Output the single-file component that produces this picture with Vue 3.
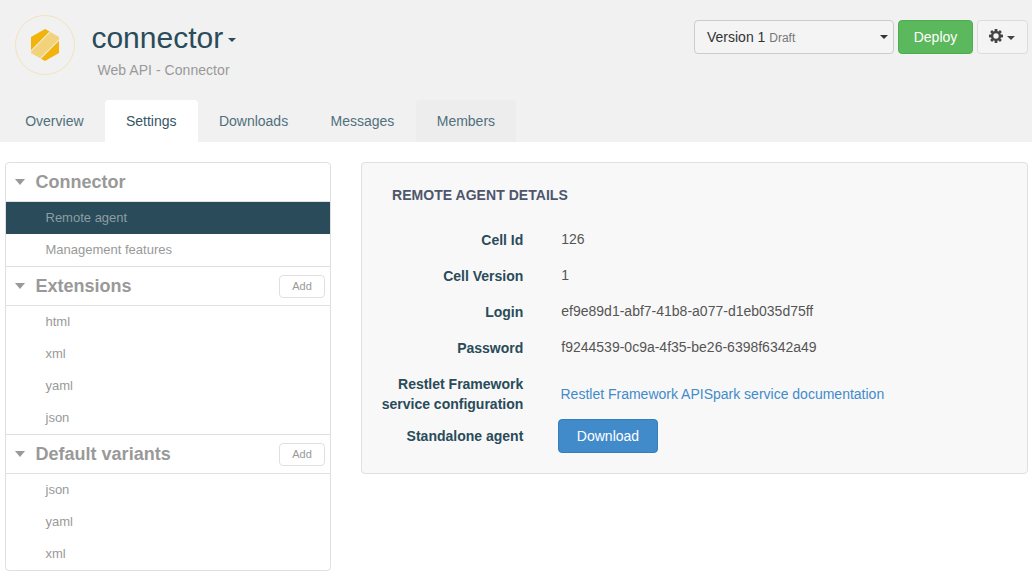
<script setup>
const tabs = [
  { label: 'Overview' },
  { label: 'Settings', state: 'active' },
  { label: 'Downloads' },
  { label: 'Messages' },
  { label: 'Members', state: 'hover' },
]

const sections = [
  { title: 'Connector', items: ['Remote agent', 'Management features'], selected: 'Remote agent' },
  { title: 'Extensions', items: ['html', 'xml', 'yaml', 'json'], addable: true },
  { title: 'Default variants', items: ['json', 'yaml', 'xml'], addable: true },
]

const details = [
  { label: 'Cell Id', value: '126' },
  { label: 'Cell Version', value: '1' },
  { label: 'Login', value: 'ef9e89d1-abf7-41b8-a077-d1eb035d75ff' },
  { label: 'Password', value: 'f9244539-0c9a-4f35-be26-6398f6342a49' },
]
</script>

<template>
  <div class="page">
    <header class="header">
      <div class="top">
        <svg class="logo" width="60" height="60" viewBox="0 0 60 60">
          <circle cx="30" cy="30" r="29.5" fill="none" stroke="#f2e3b8" />
          <path d="M30 14 L34.6 16.6 L16 35.2 V22 Z" fill="#f2b40a" />
          <path d="M35.4 17.1 L44 22 V24.6 L25.1 43.2 L16 38 V36.4 Z" fill="#f2d27b" />
          <path d="M44 25.8 V38 L30 46 L26 43.7 Z" fill="#f2b40a" />
        </svg>
        <div class="heading">
          <h1>connector<span class="caret title-caret"></span></h1>
          <p>Web API - Connector</p>
        </div>
        <div class="actions">
          <button class="btn version">
            <span>Version 1 <small>Draft</small></span><span class="caret"></span>
          </button>
          <button class="btn deploy">Deploy</button>
          <button class="btn tools">
            <svg width="14" height="14" viewBox="0 0 14 14">
              <g fill="#444">
                <rect v-for="a in [0, 45, 90, 135]" :key="a" x="5.6" y="0" width="2.8" height="14" rx=".4" :transform="`rotate(${a} 7 7)`" />
              </g>
              <circle cx="7" cy="7" r="3.9" fill="#f4f4f4" stroke="#444" stroke-width="2.4" />
            </svg>
            <span class="caret"></span>
          </button>
        </div>
      </div>
      <nav class="tabs">
        <a v-for="t in tabs" :key="t.label" :class="t.state">{{ t.label }}</a>
      </nav>
    </header>

    <div class="body">
      <aside class="sidebar">
        <section v-for="s in sections" :key="s.title">
          <h2>
            <span class="arrow"></span>{{ s.title }}
            <button v-if="s.addable" class="add">Add</button>
          </h2>
          <ul>
            <li v-for="i in s.items" :key="i" :class="{ selected: i === s.selected }">{{ i }}</li>
          </ul>
        </section>
      </aside>

      <main class="panel">
        <h3>REMOTE AGENT DETAILS</h3>
        <dl>
          <div v-for="d in details" :key="d.label" class="row">
            <dt>{{ d.label }}</dt>
            <dd>{{ d.value }}</dd>
          </div>
          <div class="row docs">
            <dt>Restlet Framework service configuration</dt>
            <dd><a>Restlet Framework APISpark service documentation</a></dd>
          </div>
          <div class="row agent">
            <dt>Standalone agent</dt>
            <dd><button class="btn download">Download</button></dd>
          </div>
        </dl>
      </main>
    </div>
  </div>
</template>

<style>
body { background: #fff; }
</style>

<style scoped>
* { box-sizing: border-box; }
.page { height: 581px; overflow: hidden; font: 14px/20px "Liberation Sans", Arial, sans-serif; color: #444; }
h1, h2, h3, p, ul, dl, dd { margin: 0; padding: 0; }
button { font-family: inherit; margin: 0; }
.caret { display: inline-block; flex: none; border: 4px solid transparent; border-top-color: currentColor; border-bottom: 0; }

.header { height: 142px; background: #f1f1f1; display: flex; flex-direction: column; justify-content: space-between; }
.top { display: flex; align-items: flex-start; padding: 15px 4px 0 15px; }
.logo { flex: none; }
.heading { margin-left: 16.4px; padding-top: 5px; }
h1 { display: flex; align-items: center; font-weight: 400; font-size: 30px; line-height: 36px; color: #294b5a; }
.title-caret { margin: 4px 0 0 5px; }
.heading p { margin: 4px 0 0 6px; color: #999; letter-spacing: .05px; }
.actions { display: flex; gap: 4px; margin-left: auto; padding-top: 5px; }
.btn { height: 34px; border: 1px solid #ccc; border-radius: 4px; font-size: 14px; line-height: 20px; padding: 0; color: #333; background: #f4f4f4; }
.version { width: 200px; display: flex; align-items: center; justify-content: space-between; padding: 0 5px 0 12px; }
.version small { font-size: 12px; color: #777; }
.deploy { width: 75px; background: #5cb85c; border-color: #4cae4c; color: #fff; }
.tools { width: 51px; display: flex; align-items: center; justify-content: center; gap: 4px; padding-right: 2px; border-color: #dcdcdc; color: #444; }
.tools svg { margin-bottom: 2px; }
.tools .caret { margin-top: 2px; }

.tabs { display: flex; padding-left: 4px; }
.tabs a { padding: 11px 21.2px; line-height: 20px; color: #50707c; border-radius: 4px 4px 0 0; }
.tabs .active { background: #fff; color: #355665; }
.tabs .hover { background: #ededed; }

.body { display: flex; align-items: flex-start; gap: 30px; padding: 20px 4px 0 5px; }
.sidebar { width: 326px; border: 1px solid #e0e0e0; border-radius: 4px; color: #999; }
.sidebar section + section { border-top: 1px solid #e0e0e0; }
h2 { display: flex; align-items: center; height: 39px; padding: 0 5px 0 9px; border-bottom: 1px solid #e0e0e0; font-size: 18px; line-height: 20px; }
.arrow { border: 5.5px solid transparent; border-top: 6px solid #999; border-bottom: 0; margin-right: 10.6px; }
.add { width: 46px; height: 23px; margin-left: auto; padding: 0; border: 1px solid #e0e0e0; border-radius: 4px; background: #fff; color: #999; font-size: 11px; line-height: 16px; }
ul { list-style: none; }
li { height: 32px; padding-left: 39.5px; font-size: 13px; line-height: 32px; }
.selected { background: #294b5a; color: #8f9da3; }

.panel { flex: 1; height: 312px; padding: 22px 20px 0 15px; border: 1px solid #e0e0e0; border-radius: 4px; background: #f8f8f8; }
h3 { margin-left: 15px; font-size: 14px; line-height: 20px; letter-spacing: .04px; color: #4d566b; }
dl { padding-top: 25px; }
.row { display: flex; height: 36px; }
dt { flex: none; width: 146.3px; text-align: right; font-weight: 700; color: #294b5a; }
dd { margin-left: 38px; margin-top: -1px; color: #555; }
.docs { height: 52px; }
.docs dd { margin-left: 37.2px; padding-top: 11px; }
.docs a { color: #428bca; }
.agent dd { margin: -7px 0 0 34.7px; }
.download { width: 100px; color: #fff; background: #428bca; border-color: #357ebd; }
</style>
